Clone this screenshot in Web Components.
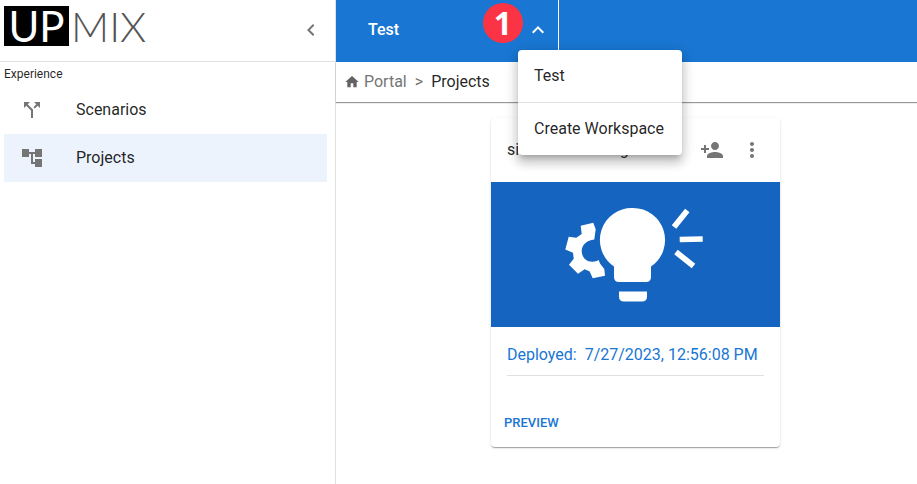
<!DOCTYPE html>
<html lang="en">
<head>
<meta charset="utf-8">
<title>UPMIX Projects</title>
<style>
  html, body { height: 100%; }
  body { margin: 0; background: #fff; color: rgba(0,0,0,.87); font: 16px/24px Roboto, "Liberation Sans", sans-serif; }
</style>
</head>
<body>
<upmix-app></upmix-app>
<script>
const base = `*,*::before{box-sizing:border-box} button{font:inherit;color:inherit;background:none;border:0;margin:0;padding:0;cursor:pointer} a{color:inherit;text-decoration:none} svg{display:block;fill:currentColor;flex:none}`;
const define = (name, css, html) => customElements.define(name, class extends HTMLElement {
  constructor() {
    super();
    this.attachShadow({ mode: 'open' }).innerHTML = `<style>${base}${css}</style>${html}`;
  }
});

const icons = {
  left: 'M15.41 7.41 14 6l-6 6 6 6 1.41-1.41L10.83 12z',
  up: 'm12 8-6 6 1.41 1.41L12 10.83l4.59 4.58L18 14z',
  split: 'm14 4 2.29 2.29-2.88 2.88 1.42 1.42 2.88-2.88L20 10V4zm-4 0H4v6l2.29-2.29 4.71 4.7V20h2v-8.41l-5.29-5.3z',
  tree: 'M22 11V3h-7v3H9V3H2v8h7V8h2v10h4v3h7v-8h-7v3h-2V8h2v3z',
  home: 'M10 20v-6h4v6h5v-8h3L12 3 2 12h3v8z',
  addPerson: 'M15 12c2.21 0 4-1.79 4-4s-1.79-4-4-4-4 1.79-4 4 1.79 4 4 4zm-9-2V7H4v3H1v2h3v3h2v-3h3v-2zm9 4c-2.67 0-8 1.34-8 4v2h16v-2c0-2.66-5.33-4-8-4z',
  more: 'M12 8c1.1 0 2-.9 2-2s-.9-2-2-2-2 .9-2 2 .9 2 2 2zm0 2c-1.1 0-2 .9-2 2s.9 2 2 2 2-.9 2-2-.9-2-2-2zm0 6c-1.1 0-2 .9-2 2s.9 2 2 2 2-.9 2-2-.9-2-2-2z'
};
customElements.define('ui-icon', class extends HTMLElement {
  connectedCallback() {
    const root = this.shadowRoot || this.attachShadow({ mode: 'open' });
    root.innerHTML = `<style>:host{display:block;flex:none;width:var(--size,24px);height:var(--size,24px)} svg{display:block;width:100%;height:100%;fill:currentColor}</style><svg viewBox="0 0 24 24" aria-hidden="true"><path d="${icons[this.getAttribute('name')]}"/></svg>`;
  }
});

define('brand-logo', `
  :host{display:flex;font:300 42px/40px Lato,"Open Sans",sans-serif}
  span{display:block;height:40px}
  .up{background:#000;color:#fff;width:65px;text-align:center;font-weight:400}
  .mix{color:#555;padding-left:2px}`,
  `<span class="up">UP</span><span class="mix">MIX</span>`);

define('side-bar', `
  :host{display:block;border-right:1px solid #e0e0e0}
  header{display:flex;align-items:center;justify-content:space-between;height:62px;padding:0 12px 10px 4px;border-bottom:1px solid #e0e0e0}
  header button{color:#757575;padding-top:8px}
  h2{margin:0;font-size:12px;font-weight:400;line-height:24px}
  nav{padding:0 8px 0 4px}
  a{display:flex;align-items:center;height:48px;padding:0 16px;gap:32px}
  a[aria-current]{background:#ecf3fc}
  a ui-icon{color:#757575}`,
  `<header><brand-logo></brand-logo><button aria-label="Collapse sidebar"><ui-icon name="left"></ui-icon></button></header>
  <nav><h2>Experience</h2>
    <a href="#scenarios"><ui-icon name="split"></ui-icon>Scenarios</a>
    <a href="#projects" aria-current="page"><ui-icon name="tree"></ui-icon>Projects</a>
  </nav>`);

define('step-badge', `
  :host{display:flex;align-items:center;justify-content:center;width:40px;height:40px;border-radius:50%;background:#fa3445;color:#fff;font:700 32px/40px "Noto Sans",sans-serif}`,
  `<slot></slot>`);

define('workspace-menu', `
  :host{display:block;background:#fff;color:rgba(0,0,0,.87);border-radius:4px;box-shadow:0 5px 5px -3px rgba(0,0,0,.2),0 8px 10px 1px rgba(0,0,0,.14),0 3px 14px 2px rgba(0,0,0,.12)}
  button{display:block;width:100%;height:52px;padding:0 16px;text-align:left;white-space:nowrap}
  button+button{height:53px;border-top:1px solid #e0e0e0}`,
  `<button role="menuitem">Test</button><button role="menuitem">Create Workspace</button>`);

define('top-bar', `
  :host{display:flex;height:62px;background:#1976d2;color:#fff}
  .picker{position:relative;width:223px;border-right:1px solid #fff}
  .current{display:flex;align-items:center;justify-content:space-between;width:100%;height:60px;padding:0 8px 0 32px;font-weight:500}
  step-badge{position:absolute;left:147px;top:3px}
  workspace-menu{position:absolute;z-index:2;left:182px;top:50px;min-width:164px}`,
  `<div class="picker"><button class="current" aria-haspopup="menu" aria-expanded="true">Test<ui-icon name="up"></ui-icon></button>
  <step-badge>1</step-badge><workspace-menu role="menu"></workspace-menu></div>`);

define('bread-crumbs', `
  :host{display:flex;align-items:center;gap:8px;height:40px;padding:0 8px;box-shadow:0 1px 1px rgba(0,0,0,.4)}
  a{display:flex;align-items:center;gap:4px;color:#757575}
  ui-icon{color:#616161}
  i{font-style:normal;color:#757575}`,
  `<a href="#portal"><ui-icon name="home" style="--size:16px"></ui-icon>Portal</a><i>&gt;</i><span>Projects</span>`);

define('project-card', `
  :host{display:block;background:#fff;border-radius:4px;overflow:hidden;box-shadow:0 2px 1px -1px rgba(0,0,0,.2),0 1px 1px rgba(0,0,0,.14),0 1px 3px rgba(0,0,0,.12)}
  header{display:flex;align-items:center;height:64px;padding:0 16px;gap:16px}
  h3{flex:1;margin:0;font-size:16px;font-weight:400}
  header button{color:#757575}
  .art{background:#1565c0}
  .art svg{width:100%;height:auto}
  .info{padding:16px 16px 0}
  p{margin:0;padding-bottom:8px;border-bottom:1px solid #e0e0e0;color:#1976d2;white-space:pre}
  footer{padding:32px 8px 9px}
  footer button{padding:3px 5px;font-size:13px;font-weight:500;color:#1976d2;text-transform:uppercase}`,
  `<header><h3><slot name="title"></slot></h3><button aria-label="Share"><ui-icon name="addPerson"></ui-icon></button><button aria-label="More"><ui-icon name="more"></ui-icon></button></header>
  <div class="art"><svg viewBox="0 0 289 145" aria-hidden="true"><g fill="#fff">
    <path d="M89.700 43.700L102.300 40.700L104.700 47.300L103.300 57.500C96 58 90.700 63 90.700 69C90.700 75 95 80 101.700 79.700C104 79.500 106 79 107.700 78L109 81.500L113.300 87L114 93.700L101.700 96.300L98.700 89.500L93.700 87.300L87 91.700L78 82.700L82.700 76.700L82 70.700L74.300 67.500L77.700 54.700L85.300 55.700L90.700 52z"/>
    <path d="M142 26a32 32 0 0 1 18 58.500V95q0 5-5 5H128q-5 0-5-5V84.500A32 32 0 0 1 142 26z"/>
    <path d="M128 109.500h28v5q0 5-5 5h-18q-5 0-5-5z"/></g>
    <path d="M183 45L196.300 28.500M188.700 57.500L211.700 57M185 70L202.500 84" stroke="#fff" stroke-width="5.700" fill="none"/></svg></div>
  <div class="info"><p><slot name="status"></slot></p></div>
  <footer><button>Preview</button></footer>`);

define('upmix-app', `
  :host{display:grid;grid-template-columns:336px minmax(0,1fr);min-height:100%}
  main{display:flex;flex-direction:column;min-width:0}
  section{display:flex;justify-content:center;padding:16px 0 16px 18px}
  project-card{width:289px}`,
  `<side-bar></side-bar><main><top-bar></top-bar><bread-crumbs></bread-crumbs>
  <section><project-card><span slot="title">simulation listing</span><span slot="status">Deployed:  7/27/2023, 12:56:08 PM</span></project-card></section></main>`);
</script>
</body>
</html>
